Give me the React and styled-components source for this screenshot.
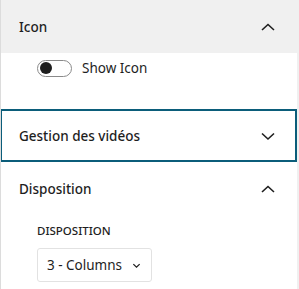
import React from "react";
import styled, { createGlobalStyle } from "styled-components";

const Global = createGlobalStyle`
  html, body { margin: 0; padding: 0; background: #f0f0f0; }
  body { font-family: "Noto Sans", "Open Sans", sans-serif; color: #1e1e1e; }
`;

const Panel = styled.div`
  width: 297px;
  height: 289px;
  background: #fff;
  border-left: 1px solid #dcdcdc;
  box-sizing: border-box;
  overflow: hidden;
`;

const Section = styled.div`
  display: flex;
  flex-direction: column;
`;

const Header = styled.div`
  display: flex;
  align-items: center;
  justify-content: space-between;
  box-sizing: border-box;
  height: 53px;
  background: ${(p) => (p.$gray ? "#f0f0f0" : "#fff")};
  border: ${(p) => (p.$focus ? "2px solid #0b5d7a" : "none")};
  margin-left: ${(p) => (p.$focus ? "-1px" : "0")};
  padding-left: ${(p) => (p.$focus ? "17px" : "18px")};
  padding-right: ${(p) => (p.$focus ? "15px" : "17px")};
`;

const Title = styled.span`
  font-size: 13.5px;
  font-weight: 500;
  color: #1e1e1e;
`;

const Chevron = ({ up }) => (
  <svg width="24" height="24" viewBox="0 0 24 24" fill="none">
    <path
      d={up ? "M6 15 L12 9.5 L18 15" : "M6 9.5 L12 15 L18 9.5"}
      stroke="#1e1e1e"
      strokeWidth="1.6"
    />
  </svg>
);

const Body = styled.div`
  display: flex;
  flex-direction: column;
  box-sizing: border-box;
  height: ${(p) => (p.$h ? `${p.$h}px` : "auto")};
  padding: ${(p) => p.$pad};
`;

const ToggleRow = styled.label`
  display: flex;
  align-items: center;
  gap: 10px;
  font-size: 13.5px;
`;

const Toggle = styled.span`
  position: relative;
  display: inline-block;
  width: 35px;
  height: 17px;
  box-sizing: border-box;
  border: 1px solid #8a8a8a;
  border-radius: 9px;
  &::after {
    content: "";
    position: absolute;
    left: 2px;
    top: 1.5px;
    width: 12px;
    height: 12px;
    border-radius: 50%;
    background: #1e1e1e;
  }
`;

const FieldLabel = styled.div`
  font-size: 11.5px;
  font-weight: 500;
  text-transform: uppercase;
  margin-bottom: 9px;
  line-height: 16px;
`;

const Select = styled.div`
  display: flex;
  align-items: center;
  justify-content: space-between;
  width: 115px;
  height: 34px;
  box-sizing: border-box;
  padding: 0 10px 0 9px;
  border: 1px solid #e2e2e2;
  border-radius: 3px;
  font-size: 13.5px;
  white-space: nowrap;
`;

const SmallChevron = () => (
  <svg width="9" height="9" viewBox="0 0 10 10" fill="none">
    <path d="M1.5 3.5 L5 6.8 L8.5 3.5" stroke="#1e1e1e" strokeWidth="1.4" />
  </svg>
);

export default function App() {
  return (
    <>
      <Global />
      <Panel>
        <Section>
          <Header $gray>
            <Title>Icon</Title>
            <Chevron up />
          </Header>
          <Body $pad="6px 0 0 36px" $h={56}>
            <ToggleRow>
              <Toggle />
              Show Icon
            </ToggleRow>
          </Body>
        </Section>
        <Section>
          <Header $focus>
            <Title>Gestion des vidéos</Title>
            <Chevron />
          </Header>
        </Section>
        <Section>
          <Header>
            <Title>Disposition</Title>
            <Chevron up />
          </Header>
          <Body $pad="8px 0 0 36px">
            <FieldLabel>Disposition</FieldLabel>
            <Select>
              3 - Columns
              <SmallChevron />
            </Select>
          </Body>
        </Section>
      </Panel>
    </>
  );
}
